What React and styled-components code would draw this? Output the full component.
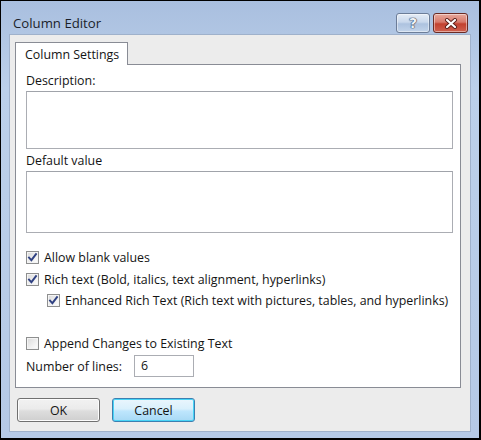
import React from "react";
import styled, { createGlobalStyle } from "styled-components";

const GlobalStyle = createGlobalStyle`
  html, body {
    margin: 0;
    padding: 0;
    background: #ffffff;
  }
  body {
    font-family: "Open Sans", "Noto Sans", sans-serif;
    font-size: 12.4px;
    color: #141414;
  }
`;

const Window = styled.div`
  width: 481px;
  height: 440px;
  box-sizing: border-box;
  border: 1px solid #000;
  border-right-width: 2px;
  border-bottom-width: 2px;
  background: linear-gradient(180deg, #a9bfdf 0%, #bcd0ea 20%, #b5c9e6 100%);
  display: flex;
  flex-direction: column;
  padding: 0 8px 7px 8px;
`;

const TitleBar = styled.div`
  height: 34px;
  box-sizing: border-box;
  padding: 12px 3px 0 4px;
  display: flex;
  align-items: flex-start;
`;

const Title = styled.span`
  flex: 1;
  font-size: 13.2px;
  line-height: 21px;
  color: #1b1f2a;
`;

const CaptionButton = styled.div`
  height: 20px;
  width: ${(p) => p.$w}px;
  margin-left: ${(p) => p.$gap || 0}px;
  box-sizing: border-box;
  border: 1px solid ${(p) => (p.$red ? "#6b2b24" : "#6c7d98")};
  border-radius: 3px;
  display: flex;
  align-items: center;
  justify-content: center;
  background: ${(p) =>
    p.$red
      ? "linear-gradient(180deg, #e8a99c 0%, #d7796b 45%, #c2412f 55%, #cf6150 100%)"
      : "linear-gradient(180deg, #e4ecf6 0%, #c9d8ec 45%, #adc2df 55%, #c2d4ea 100%)"};
  box-shadow: inset 0 0 0 1px rgba(255, 255, 255, 0.45);
`;

const HelpGlyph = styled.span`
  font-family: "DejaVu Sans", sans-serif;
  font-weight: bold;
  font-size: 14px;
  line-height: 14px;
  color: #eef2f8;
  text-shadow: 0 0 1px #2b3a55, 0 0 1px #2b3a55, 0 0 1px #2b3a55;
`;

const Client = styled.div`
  flex: 1;
  background: #ececec;
  border: 1px solid #9fb1cb;
  box-sizing: border-box;
  padding: 7px 9px 9px 5px;
  display: flex;
  flex-direction: column;
`;

const TabStrip = styled.div`
  display: flex;
  position: relative;
  z-index: 1;
`;

const Tab = styled.div`
  height: 23px;
  box-sizing: border-box;
  padding: 0 8px 0 9px;
  border: 1px solid #898c95;
  border-bottom: none;
  background: #ffffff;
  display: flex;
  align-items: center;
  margin-bottom: -1px;
`;

const Panel = styled.div`
  height: 324px;
  box-sizing: border-box;
  border: 1px solid #898c95;
  background: #ffffff;
  padding: 0 7px 0 10px;
  display: flex;
  flex-direction: column;
`;

const FieldLabel = styled.div`
  height: 16px;
  line-height: 16px;
  margin-top: ${(p) => p.$mt}px;
`;

const TextBox = styled.div`
  height: ${(p) => p.$h}px;
  margin-top: 2px;
  box-sizing: border-box;
  border: 1px solid #abadb3;
  border-top-color: #a0a3aa;
  background: #fff;
`;

const CheckRow = styled.label`
  display: flex;
  align-items: center;
  height: 16px;
  margin-top: ${(p) => p.$mt}px;
  padding-left: ${(p) => p.$indent || 0}px;
  white-space: nowrap;
`;

const Box = styled.span`
  width: 13px;
  height: 13px;
  box-sizing: border-box;
  border: 1px solid #8e8f8f;
  background: linear-gradient(135deg, #d9d9d9 0%, #f1f1f1 60%, #ffffff 100%);
  box-shadow: inset 0 0 0 1px #f4f4f4;
  display: flex;
  align-items: center;
  justify-content: center;
  margin-right: 5px;
  flex-shrink: 0;
`;

const LinesRow = styled.div`
  display: flex;
  align-items: center;
  margin-top: 4px;
  height: 22px;
`;

const LinesInput = styled.div`
  margin-left: 12px;
  width: 60px;
  height: 22px;
  box-sizing: border-box;
  border: 1px solid #abadb3;
  padding-left: 6px;
  line-height: 20px;
`;

const ButtonRow = styled.div`
  display: flex;
  gap: 12px;
  margin-top: 10px;
  padding-left: 2px;
`;

const PushButton = styled.div`
  width: 83px;
  height: 24px;
  box-sizing: border-box;
  border: 1px solid ${(p) => (p.$focus ? "#3c7fb1" : "#707070")};
  border-radius: 3px;
  background: ${(p) =>
    p.$focus
      ? "linear-gradient(180deg, #eaf6fd 0%, #d9f0fc 45%, #bee6fd 55%, #a7d9f5 100%)"
      : "linear-gradient(180deg, #f2f2f2 0%, #ebebeb 45%, #dddddd 55%, #cfcfcf 100%)"};
  box-shadow: ${(p) =>
    p.$focus ? "inset 0 0 0 1px #48d4f6" : "inset 0 0 0 1px #fcfcfc"};
  display: flex;
  align-items: center;
  justify-content: center;
`;

function Check({ checked }) {
  return (
    <Box>
      {checked && (
        <svg width="11" height="11" viewBox="0 0 11 11">
          <path
            d="M2 5.6 L4.4 8.2 L9 2.2"
            fill="none"
            stroke="#2f4182"
            strokeWidth="1.9"
            strokeLinecap="square"
          />
        </svg>
      )}
    </Box>
  );
}

function CloseGlyph() {
  return (
    <svg width="14" height="11" viewBox="0 0 14 11">
      <path
        d="M3 2 L11 9 M11 2 L3 9"
        stroke="#5a1e18"
        strokeWidth="4"
        strokeLinecap="round"
      />
      <path
        d="M3 2 L11 9 M11 2 L3 9"
        stroke="#ffffff"
        strokeWidth="2.2"
        strokeLinecap="round"
      />
    </svg>
  );
}

export default function App() {
  return (
    <>
      <GlobalStyle />
      <Window>
        <TitleBar>
          <Title>Column Editor</Title>
          <CaptionButton $w={34}>
            <HelpGlyph>?</HelpGlyph>
          </CaptionButton>
          <CaptionButton $w={35} $gap={3} $red>
            <CloseGlyph />
          </CaptionButton>
        </TitleBar>
        <Client>
          <TabStrip>
            <Tab>Column Settings</Tab>
          </TabStrip>
          <Panel>
            <FieldLabel $mt={8}>Description:</FieldLabel>
            <TextBox $h={58} />
            <FieldLabel $mt={4}>Default value</FieldLabel>
            <TextBox $h={62} />
            <CheckRow $mt={16}>
              <Check checked />
              Allow blank values
            </CheckRow>
            <CheckRow $mt={6}>
              <Check checked />
              Rich text (Bold, italics, text alignment, hyperlinks)
            </CheckRow>
            <CheckRow $mt={5} $indent={21}>
              <Check checked />
              Enhanced Rich Text (Rich text with pictures, tables, and hyperlinks)
            </CheckRow>
            <CheckRow $mt={27}>
              <Check />
              Append Changes to Existing Text
            </CheckRow>
            <LinesRow>
              Number of lines:
              <LinesInput>6</LinesInput>
            </LinesRow>
          </Panel>
          <ButtonRow>
            <PushButton>OK</PushButton>
            <PushButton $focus>Cancel</PushButton>
          </ButtonRow>
        </Client>
      </Window>
    </>
  );
}
